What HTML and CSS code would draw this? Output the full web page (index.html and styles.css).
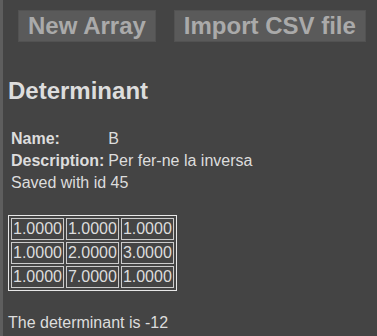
FILE: index.html
```html
<!DOCTYPE html>
<html lang="ca">

<head>
    <meta charset="UTF-8">
    <meta name="viewport" content="width=device-width, initial-scale=1.0">
    <title>Determinant</title>
    <link rel="stylesheet" href="styles.css">
</head>

<body>
    <div class="toolbar">
        <button class="tool-btn">New Array</button>
        <button class="tool-btn">Import CSV file</button>
    </div>

    <h2 class="title">Determinant</h2>

    <table class="info">
        <tr>
            <th>Name:</th>
            <td>B</td>
        </tr>
        <tr>
            <th>Description:</th>
            <td>Per fer-ne la inversa</td>
        </tr>
        <tr>
            <td colspan="2">Saved with id 45</td>
        </tr>
    </table>

    <table class="matrix">
        <tr>
            <td>1.0000</td>
            <td>1.0000</td>
            <td>1.0000</td>
        </tr>
        <tr>
            <td>1.0000</td>
            <td>2.0000</td>
            <td>3.0000</td>
        </tr>
        <tr>
            <td>1.0000</td>
            <td>7.0000</td>
            <td>1.0000</td>
        </tr>
    </table>

    <p class="result">The determinant is -12</p>
</body>

</html>
```

FILE: styles.css
```css
html {
    background: #444444;
}

body {
    margin: 0;
    padding: 0 8px 0 5px;
    min-height: 100vh;
    box-sizing: border-box;
    border-left: 3px solid #5e5e5e;
    font-family: "Liberation Sans", Arial, sans-serif;
    font-size: 16px;
    color: #dddddd;
}

.toolbar {
    display: flex;
    gap: 18px;
    padding: 10px 0 0 10px;
    margin-bottom: 35px;
}

.tool-btn {
    flex: none;
    white-space: nowrap;
    font-family: "Liberation Sans", Arial, sans-serif;
    font-size: 24px;
    font-weight: bold;
    line-height: normal;
    color: #aaaaaa;
    background: #5a5a5a;
    border: 1px solid #525252;
    padding: 1px 9px;
    margin: 0;
}

.title {
    font-size: 24px;
    font-weight: bold;
    margin: 20px 0 22px;
    color: #dddddd;
}

.info {
    border-spacing: 2px;
}

.info th {
    text-align: left;
    padding: 1px;
}

.info td {
    padding: 1px;
}

.matrix {
    margin-top: 20px;
    border: 1px solid #e8e8e8;
    border-spacing: 2px;
}

.matrix td {
    border: 1px solid #cccccc;
    padding: 1px;
}

.result {
    margin: 23px 0 0;
}
```
